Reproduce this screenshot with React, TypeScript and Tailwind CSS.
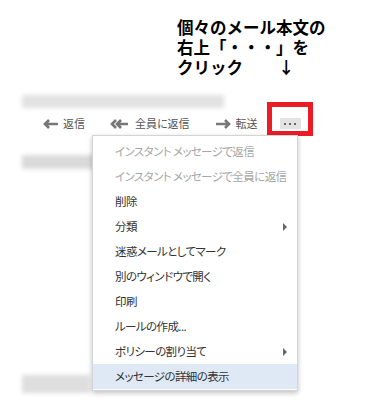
import React from "react";

const menuItems = [
  { label: "インスタント メッセージで返信", disabled: true },
  { label: "インスタント メッセージで全員に返信", disabled: true },
  { label: "削除" },
  { label: "分類", sub: true },
  { label: "迷惑メールとしてマーク" },
  { label: "別のウィンドウで開く" },
  { label: "印刷" },
  { label: "ルールの作成..." },
  { label: "ポリシーの割り当て", sub: true },
  { label: "メッセージの詳細の表示", active: true },
];

function ArrowLeft() {
  return (
    <svg width="15" height="10" viewBox="0 0 15 10" className="text-[#777]">
      <path d="M6 1 L2 5 L6 9 M2.5 5 H15" fill="none" stroke="currentColor" strokeWidth="2.6" />
    </svg>
  );
}

function ArrowDouble() {
  return (
    <svg width="18" height="10" viewBox="0 0 18 10" className="text-[#777]">
      <path d="M6 1 L2 5 L6 9 M11 1 L7 5 L11 9 M7 5 H18" fill="none" stroke="currentColor" strokeWidth="2.6" />
    </svg>
  );
}

function ArrowRight() {
  return (
    <svg width="15" height="10" viewBox="0 0 15 10" className="text-[#777]">
      <path d="M9 1 L13 5 L9 9 M0 5 H12.5" fill="none" stroke="currentColor" strokeWidth="2.6" />
    </svg>
  );
}

export default function App() {
  return (
    <div className="relative w-[367px] h-[412px] overflow-hidden bg-white font-['Noto_Sans_CJK_JP',sans-serif]">
      {/* annotation */}
      <div className="pt-[17px] pl-[177px] text-[16.5px] leading-[20px] font-bold text-black">
        <div>個々のメール本文の</div>
        <div>右上「・・・」を</div>
        <div className="flex">
          <span>クリック</span>
          <span className="ml-[35px]">↓</span>
        </div>
      </div>

      {/* blurred subject line */}
      <div className="ml-[22px] mt-[18px] h-[13px] w-[202px] bg-[#e2e2e2] blur-[2px]" />

      {/* toolbar */}
      <div className="mt-[8px] flex h-[15px] items-center whitespace-nowrap pl-[43px] text-[11px] text-[#555] [font-feature-settings:'palt']">
        <ArrowLeft />
        <span className="ml-[5px]">返信</span>
        <span className="ml-[25px] flex"><ArrowDouble /></span>
        <span className="ml-[7px]">全員に返信</span>
        <span className="ml-[26px] flex"><ArrowRight /></span>
        <span className="ml-[5px]">転送</span>
        <div className="ml-[22px] flex h-[11px] w-[21px] items-center justify-center gap-[3px] bg-[#e3e3e3]">
          <span className="h-[2px] w-[2px] bg-[#666]" />
          <span className="h-[2px] w-[2px] bg-[#666]" />
          <span className="h-[2px] w-[2px] bg-[#666]" />
        </div>
      </div>

      {/* blurred content */}
      <div className="ml-[22px] mt-[24px] h-[14px] w-[75px] bg-[#dadada] blur-[2px]" />
      <div className="ml-[22px] mt-[206px] h-[18px] w-[68px] bg-[#dedede] blur-[2px]" />

      {/* red highlight */}
      <div className="absolute left-[267px] top-[102px] h-[34px] w-[46px] border-[5px] border-[#ec1c24]" />

      {/* dropdown menu */}
      <div className="absolute left-[92px] top-[135px] w-[206px] border border-[#d4d4d4] bg-white pt-[3px] pb-[1px] shadow-[0_2px_5px_rgba(0,0,0,0.25)] text-[11.5px] tracking-[-0.6px] [font-feature-settings:'palt']">
        {menuItems.map((item) => (
          <div
            key={item.label}
            className={
              "flex h-[25px] items-center justify-between whitespace-nowrap pl-[22px] pr-[10px] " +
              (item.active ? "bg-[#dfe9f5] " : "") +
              (item.disabled ? "text-[#a6a6a6]" : "text-[#333]")
            }
          >
            <span>{item.label}</span>
            {item.sub && (
              <span className="h-0 w-0 border-y-[4px] border-l-[4px] border-y-transparent border-l-[#666]" />
            )}
          </div>
        ))}
      </div>
    </div>
  );
}
